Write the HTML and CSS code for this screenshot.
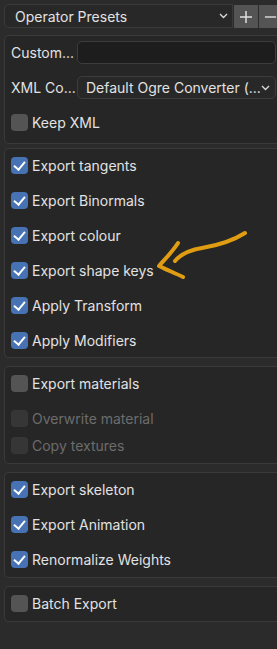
FILE: index.html
```html
<!DOCTYPE html>
<html lang="en">
<head>
    <meta charset="UTF-8">
    <title>Ogre Export Options</title>
    <link rel="stylesheet" href="styles.css">
</head>
<body>
    <div class="presets">
        <div class="preset-select">
            <span>Operator Presets</span>
            <svg class="chevron" width="9" height="6" viewBox="0 0 9 6"><path d="M1 1 L4.5 4.5 L8 1" fill="none" stroke="#d8d8d8" stroke-width="1.4"/></svg>
        </div>
        <div class="preset-btn">
            <svg width="14" height="14" viewBox="0 0 14 14"><path d="M7 1 V13 M1 7 H13" stroke="#e0e0e0" stroke-width="1.5"/></svg>
        </div>
        <div class="preset-btn last">
            <svg width="14" height="14" viewBox="0 0 14 14"><path d="M1 7 H13" stroke="#e0e0e0" stroke-width="1.5"/></svg>
        </div>
    </div>

    <div class="panel panel-first">
        <div class="field-row">
            <span class="field-label">Custom...</span>
            <div class="text-input"></div>
        </div>
        <div class="field-row">
            <span class="field-label">XML Co...</span>
            <div class="select">
                <span>Default Ogre Converter (...</span>
                <svg class="chevron" width="9" height="6" viewBox="0 0 9 6"><path d="M1 1 L4.5 4.5 L8 1" fill="none" stroke="#d8d8d8" stroke-width="1.4"/></svg>
            </div>
        </div>
        <div class="check-row"><span class="box"></span>Keep XML</div>
    </div>

    <div class="panel panel-mesh">
        <div class="check-row"><span class="box on"></span>Export tangents</div>
        <div class="check-row"><span class="box on"></span>Export Binormals</div>
        <div class="check-row"><span class="box on"></span>Export colour</div>
        <div class="check-row"><span class="box on"></span>Export shape keys</div>
        <div class="check-row"><span class="box on"></span>Apply Transform</div>
        <div class="check-row"><span class="box on"></span>Apply Modifiers</div>
        <svg class="scribble" width="100" height="55" viewBox="0 0 100 55">
            <path d="M91 5 C80 12 66 17 48 20 C36 22 26 27 21 33" fill="none" stroke="#e09d12" stroke-width="4" stroke-linecap="round"/>
            <path d="M24 15 C19 23 12 30 5 38 C13 42 21 45 29 49" fill="none" stroke="#e09d12" stroke-width="4" stroke-linecap="round" stroke-linejoin="round"/>
        </svg>
    </div>

    <div class="panel panel-materials">
        <div class="check-row"><span class="box"></span>Export materials</div>
        <div class="sub-rows">
            <div class="check-row small disabled"><span class="box"></span>Overwrite material</div>
            <div class="check-row small disabled"><span class="box"></span>Copy textures</div>
        </div>
    </div>

    <div class="panel">
        <div class="check-row"><span class="box on"></span>Export skeleton</div>
        <div class="check-row"><span class="box on"></span>Export Animation</div>
        <div class="check-row"><span class="box on"></span>Renormalize Weights</div>
    </div>

    <div class="panel">
        <div class="check-row"><span class="box"></span>Batch Export</div>
    </div>
</body>
</html>
```

FILE: styles.css
```css
body {
    margin: 0;
    background: #2b2b2b;
    font-family: Inter, 'Noto Sans', sans-serif;
    font-size: 14px;
    color: #e2e2e2;
    height: 649px;
    overflow: hidden;
}

.presets {
    display: flex;
    padding: 4px 0 0 4px;
    height: 24px;
}

.preset-select {
    width: 229px;
    box-sizing: border-box;
    display: flex;
    align-items: center;
    justify-content: space-between;
    padding: 0 4px 0 10px;
    background: #282828;
    border: 1px solid #3a3a3a;
    border-radius: 5px 0 0 5px;
}

.preset-btn {
    width: 24px;
    margin: 1px 0 0 1px;
    display: flex;
    align-items: center;
    justify-content: center;
    background: #545454;
}

.preset-btn.last {
    width: 18px;
    justify-content: flex-start;
    padding-left: 5px;
    box-sizing: border-box;
}

.chevron {
    flex: none;
}

/* panels run off the right edge, so no right border */
.panel {
    position: relative;
    margin: 8px 0 0 4px;
    background: #262626;
    border: 1px solid #3a3a3a;
    border-right: none;
    border-radius: 5px 0 0 5px;
    box-sizing: border-box;
}

.panel-first {
    margin-top: 7px;
    height: 109px;
}

.panel-mesh {
    margin-top: 4px;
    height: 210px;
}

.panel-materials {
    height: 98px;
}

.panel > .check-row:first-child {
    margin-top: -1px;
}

.field-row {
    display: flex;
    align-items: center;
    height: 35px;
    padding-left: 6px;
}

.field-row:first-child {
    margin-top: -1px;
}

.field-label {
    width: 66px;
    flex: none;
    white-space: nowrap;
}

.text-input,
.select {
    width: 199px;
    height: 23px;
    box-sizing: border-box;
    border: 1px solid #3c3c3c;
    border-radius: 5px;
}

.text-input {
    background: #1d1d1d;
}

.select {
    background: #282828;
    display: flex;
    align-items: center;
    justify-content: space-between;
    padding: 0 5px 0 8px;
    white-space: nowrap;
}

.check-row {
    display: flex;
    align-items: center;
    height: 35px;
    padding-left: 6px;
    white-space: nowrap;
}

.check-row.small {
    height: 27px;
}

.sub-rows {
    padding: 4px 0 4px;
}

.box {
    width: 17px;
    height: 17px;
    margin-right: 4px;
    border-radius: 4px;
    background: #545454;
    flex: none;
    position: relative;
}

.box.on {
    background: #4772b3;
}

.box.on::after {
    content: "";
    position: absolute;
    left: 5px;
    top: 2px;
    width: 5px;
    height: 9px;
    border: solid #fff;
    border-width: 0 2px 2px 0;
    transform: rotate(40deg);
}

.disabled {
    color: #6c6c6c;
}

.disabled .box {
    background: #363636;
}

.scribble {
    position: absolute;
    left: 149px;
    top: 79px;
}
```
